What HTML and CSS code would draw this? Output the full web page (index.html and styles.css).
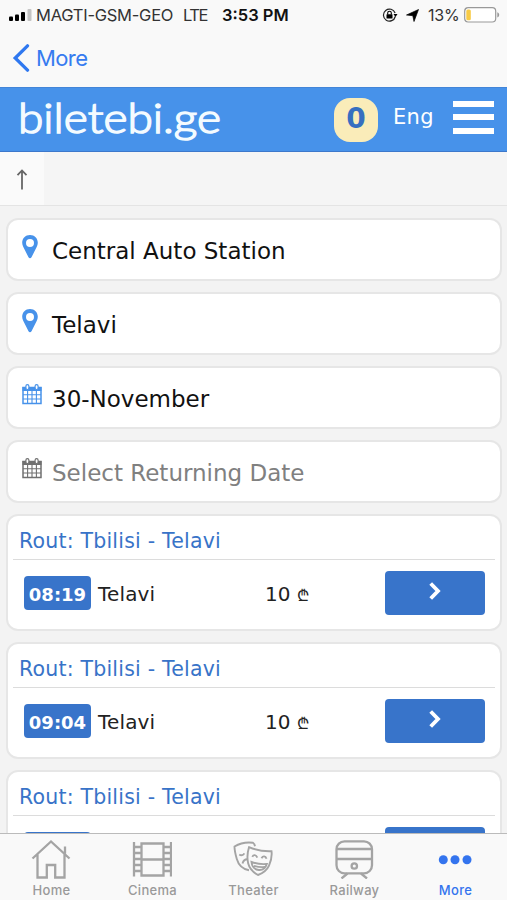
FILE: index.html
```html
<!DOCTYPE html>
<html lang="en">
<head>
<meta charset="utf-8">
<title>biletebi.ge</title>
<link rel="stylesheet" href="styles.css">
</head>
<body>
<svg class="defs" width="0" height="0" aria-hidden="true">
  <symbol id="pin" viewBox="0 0 16 24"><path fill="currentColor" fill-rule="evenodd" d="M8 0C3.500 0 0.200 3.400 0.200 7.700c0 1.500.4 2.700 1 4l5.300 10.600c.7 1.300 2.300 1.300 3 0l5.300-10.600c.6-1.300 1-2.500 1-4C15.800 3.400 12.500 0 8 0zm0 4a4 4 0 1 1 0 8 4 4 0 0 1 0-8z"/></symbol>
  <symbol id="calendar" viewBox="0 0 20 21"><g fill="none" stroke="currentColor"><path stroke-width="1.500" d="M1 3.500h18v16H1z"/><path stroke-width="1.100" d="M1 10.800h18M1 15h18M5.600 7v12.500M10 7v12.500M14.400 7v12.500"/></g><path fill="currentColor" d="M.5 3h19v4H.5z"/><g fill="#fff" stroke="currentColor" stroke-width="1.200"><rect x="3.900" y=".7" width="3" height="4.800" rx="1.500"/><rect x="13.100" y=".7" width="3" height="4.800" rx="1.500"/></g></symbol>
  <symbol id="chevron" viewBox="0 0 12 18"><path fill="none" stroke="#fff" stroke-width="3.800" d="M1.700 1.500 9 9l-7.300 7.500"/></symbol>
</svg>
<div class="screen">
  <header class="status">
    <svg class="signal" viewBox="0 0 24 12"><rect x="0" y="7.500" width="4" height="4.500" rx="1"/><rect x="6" y="5.500" width="4" height="6.500" rx="1"/><rect x="12" y="3" width="4" height="9" rx="1"/><rect x="18.500" y="0" width="4" height="12" rx="1" fill="#c4c4c4"/></svg>
    <span class="carrier">MAGTI-GSM-GEO</span>
    <span class="network">LTE</span>
    <span class="clock">3:53 PM</span>
    <svg class="lock" viewBox="0 0 16 14"><path d="M13.300 8.500A6 6 0 1 1 13.100 5" fill="none" stroke="#222" stroke-width="1.200"/><path d="M11.500 6h4l-2 3z"/><rect x="4.500" y="6.300" width="6" height="4.200" rx=".5"/><path d="M5.700 6.500V5a1.800 1.800 0 0 1 3.600 0v1.500" fill="none" stroke="#000" stroke-width="1.100"/></svg>
    <svg class="arrow" viewBox="0 0 13 13"><path d="M12.500.5 8 12.500 6.800 6.700.5 6z" stroke="#000" stroke-width=".7" stroke-linejoin="round"/></svg>
    <span class="percent">13%</span>
    <svg class="battery" viewBox="0 0 36 16"><rect x=".7" y=".7" width="31" height="14.300" rx="3.500" fill="#fff" stroke="#999" stroke-width="1.200"/><rect x="2.300" y="2.500" width="4.500" height="10.700" rx="1.500" fill="#f8cb46"/><path d="M33.300 5.200v5.200c2.500-.7 2.500-4.500 0-5.200z" fill="#999"/></svg>
  </header>
  <nav class="back">
    <svg viewBox="0 0 18 28"><path d="M15.500 1.800 3.200 14l12.300 12.200" fill="none" stroke="#2f78f0" stroke-width="3.300" stroke-linecap="round"/></svg>
    <span>More</span>
  </nav>
  <div class="brand">
    <svg class="logo" viewBox="0 0 206 50"><text x="0" y="32" textLength="203" lengthAdjust="spacingAndGlyphs">biletebi.ge</text></svg>
    <span class="count">0</span>
    <span class="lang">Eng</span>
    <span class="menu"><i></i><i></i><i></i></span>
  </div>
  <div class="upbar"><div class="up"><svg viewBox="0 0 12 21"><path d="M6 20.500V2M1.500 6.200 6 1.500l4.500 4.700" fill="none" stroke="#666" stroke-width="1.800"/></svg></div></div>
  <main class="content">
    <div class="field"><svg class="pin"><use href="#pin"/></svg><span>Central Auto Station</span></div>
    <div class="field"><svg class="pin"><use href="#pin"/></svg><span>Telavi</span></div>
    <div class="field"><svg class="cal"><use href="#calendar"/></svg><span>30-November</span></div>
    <div class="field empty"><svg class="cal"><use href="#calendar"/></svg><span>Select Returning Date</span></div>
    <section class="trip">
      <h2><span>Rout: Tbilisi - Telavi</span></h2>
      <div class="row"><b class="time">08:19</b><span class="dest">Telavi</span><span class="price">10 <small>₾</small></span><a class="go"><svg><use href="#chevron"/></svg></a></div>
    </section>
    <section class="trip">
      <h2><span>Rout: Tbilisi - Telavi</span></h2>
      <div class="row"><b class="time">09:04</b><span class="dest">Telavi</span><span class="price">10 <small>₾</small></span><a class="go"><svg><use href="#chevron"/></svg></a></div>
    </section>
    <section class="trip">
      <h2><span>Rout: Tbilisi - Telavi</span></h2>
      <div class="row"><b class="time"></b><span class="dest"></span><span class="price"></span><a class="go"></a></div>
    </section>
  </main>
  <footer class="tabs">
    <div class="tab"><svg viewBox="0 0 40 40"><path d="M1.500 19.500 20 2.500l18.500 17M6.500 15.500v23h9.300V26h8.400v12.500h9.300v-23M34 14.500V7.500"/></svg><span>Home</span></div>
    <div class="tab"><svg viewBox="0 0 40 40"><path d="M2 3v34.500M39 3v34.500M9.500 4.500h22v32h-22zM9.500 20.500h22M2 8h7.500M2 14h7.500M2 20h7.500M2 26h7.500M2 32h7.500M31.500 8H39M31.500 14H39M31.500 20H39M31.500 26H39M31.500 32H39"/></svg><span>Cinema</span></div>
    <div class="tab"><svg class="masks" viewBox="0 0 40 40"><path d="M16 31.200C9 30 5.500 26 3.800 20 2.500 15.500 1.500 11.500 1.500 7.500 7 4.200 13.500 3 20 3.800c1.200.8 1.700 2 2 3.500M6.300 15.500c1.800 1.300 4 .8 5-1.200M9.500 24.500c.8-3 2.700-4.500 5.200-4.300"/><path d="M16 8.200c7.500 3.200 15 4.300 22.500 4 .6 4.500-.5 10-2.500 14.500-2 4.500-6 7.500-11 9.300-5-2.800-8.500-6.500-9.800-11.500C14 19.500 14.500 13 16 8.200zM19.300 17.800c1.200-2.500 3.800-2.300 5 .8M28.500 19.200c1.500-2.600 4-2.400 5 .5M18.500 23c5 1.800 10 2.500 15.300 2-1.200 4-4 6.300-8 6-4-.4-6.800-3.500-7.300-8zM21 26.800c3.500 1.200 7 1.600 11 1.200"/></svg><span>Theater</span></div>
    <div class="tab"><svg viewBox="0 0 40 40"><rect x="2.500" y="2.300" width="35.500" height="32" rx="8"/><path d="M3 10h34.500M3 20h34.500M13.500 34.500l-6 5M27 34.500l6 5"/><circle cx="20.300" cy="27" r="2.700"/></svg><span>Railway</span></div>
    <div class="tab on"><svg viewBox="0 0 40 40"><circle cx="8.300" cy="20.700" r="4.500"/><circle cx="20" cy="20.700" r="4.500"/><circle cx="32" cy="20.700" r="4.500"/></svg><span>More</span></div>
  </footer>
</div>
</body>
</html>
```
FILE: styles.css
```css
* { box-sizing: border-box; }
body { margin: 0; background: #f9f9f9; font-family: "DejaVu Sans", sans-serif; }
svg { display: block; flex: none; }
.defs { position: absolute; }
.screen { width: 507px; height: 900px; overflow: hidden; display: flex; flex-direction: column; }
.screen span { white-space: nowrap; }
.status { height: 30px; flex: none; display: flex; align-items: center; padding-left: 9px; font: 17px/30px Inter, sans-serif; color: #333; }
.signal { width: 24px; height: 12px; }
.carrier { width: 137px; margin-left: 3px; font-size: 16.500px; letter-spacing: -.25px; }
.network { width: 39px; margin-left: 10px; font-size: 16.500px; letter-spacing: -1.500px; }
.clock { width: 66px; font-size: 16.500px; font-weight: 600; color: #111; }
.lock { width: 16px; height: 14px; margin-left: 94px; }
.arrow { width: 13px; height: 13px; margin-left: 8px; }
.percent { width: 31px; margin-left: 9px; font-size: 16px; letter-spacing: -.2px; }
.battery { width: 36px; height: 16px; margin-left: 5px; }
.back { height: 57px; flex: none; display: flex; align-items: center; padding: 0 0 2px 12px; font: 22px/30px Inter, sans-serif; color: #367bf0; }
.back svg { width: 18px; height: 28px; }
.back span { margin-left: 6px; letter-spacing: -.6px; }
.brand { height: 65px; flex: none; background: #4792ea; border-top: 1px solid #4385d8; border-bottom: 1px solid #3d78cb; display: flex; align-items: center; padding-left: 18px; color: #fff; }
.logo { width: 206px; height: 50px; margin-top: 12px; overflow: visible; }
.logo text { font: 300 41px Lato, sans-serif; fill: #f4fbff; stroke: #f4fbff; stroke-width: 1.500px; }
.count { width: 44px; height: 44px; margin-left: 110px; border-radius: 16px; background: #faecb9; color: #376fc0; font-weight: 700; font-size: 28px; line-height: 42px; text-align: center; }
.lang { width: 42px; margin: -6px 0 0 15px; font-size: 21px; letter-spacing: .3px; }
.menu { width: 41px; height: 33px; margin: -5px 0 0 18px; display: flex; flex-direction: column; justify-content: space-between; }
.menu i { height: 6px; background: #fff; }
.upbar { height: 54px; flex: none; background: #f5f5f5; border-bottom: 1px solid #e4e4e4; }
.up { width: 44px; height: 53px; background: #fafafa; padding: 17px 0 0 16px; }
.up svg { width: 12px; height: 21px; }
.content { height: 627px; flex: none; overflow: hidden; background: #f3f3f3; padding: 12px 5px 0 6px; }
.field { height: 63px; margin-bottom: 11px; background: #fff; border: 2px solid #e6e6e6; border-radius: 12px; display: flex; padding: 15px 0 0 14px; font-size: 23px; line-height: 34px; color: #111; }
.field span { margin: -1px 0 0 12px; }
.pin { width: 16px; height: 24px; margin: 0 2px 0 0; color: #4792ea; }
.cal { width: 20px; height: 21px; margin: 1px -2px 0 0; color: #4792ea; }
.empty { color: #808080; }
.empty .cal { color: #707070; }
.trip { height: 117px; margin-bottom: 11px; padding: 0 5px; background: #fff; border: 2px solid #e6e6e6; border-radius: 12px; }
.trip h2 { height: 44px; margin: 0; padding-left: 6px; border-bottom: 1px solid #dcdcdc; font-size: 20.500px; font-weight: 400; line-height: 51px; letter-spacing: .2px; color: #3873c8; }
.row { display: flex; align-items: center; height: 67px; padding-left: 11px; font-size: 20px; letter-spacing: .15px; color: #222; }
.time { width: 67px; height: 34px; margin-top: -2px; border-radius: 4px; background: #3874ca; color: #fff; font-size: 18px; line-height: 37px; letter-spacing: 0; text-align: center; }
.dest { width: 167px; padding-left: 7px; }
.price { width: 127px; padding-left: 7px; letter-spacing: 0; }
.price small { font-size: 16px; }
.go { width: 100px; height: 44px; margin-top: -2px; border-radius: 4px; background: #3874ca; display: flex; justify-content: center; padding: 11px 1px 0 0; }
.go svg { width: 12px; height: 18px; }
.tabs { height: 67px; flex: none; border-top: 1px solid #bbb; background: #f9f9f9; display: grid; grid-template-columns: repeat(5, 101px); padding-left: 1px; color: #999; font: 500 13px/16px Inter, sans-serif; letter-spacing: .3px; }
.tab { display: flex; flex-direction: column; align-items: center; padding-top: 5px; }
.tab svg { width: 40px; height: 40px; margin-right: 2px; fill: none; stroke: #a4a4a4; stroke-width: 2.300; }
.tab .masks { stroke-width: 1.900; }
.tab span { margin-top: 3px; }
.tab.on { color: #3474ee; }
.tab.on svg { fill: #3474ee; stroke: none; }
```
